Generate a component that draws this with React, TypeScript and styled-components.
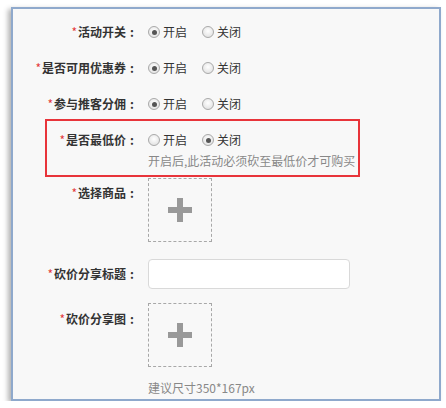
import styled, { createGlobalStyle } from 'styled-components';

const GlobalStyle = createGlobalStyle`
    html, body {
        margin: 0;
        padding: 0;
        background: #ffffff;
    }
    body {
        font-family: 'Noto Sans CJK SC', 'Noto Sans', sans-serif;
        font-size: 12px;
        color: #333;
    }
`;

const Panel = styled.div`
    box-sizing: border-box;
    width: 430px;
    height: 394px;
    margin: 7px 0 0 11px;
    padding-top: 13px;
    border: 2px solid #8fa9cc;
    background: #f8f8f8;
    box-shadow: -3px 2px 5px rgba(0, 0, 0, 0.3);
    overflow: hidden;
`;

const Row = styled.div<{ $gap?: number; $center?: boolean }>`
    display: flex;
    align-items: ${(p) => (p.$center ? 'center' : 'flex-start')};
    margin-bottom: ${(p) => p.$gap ?? 0}px;
`;

const Label = styled.div<{ $top?: number }>`
    box-sizing: border-box;
    width: 135px;
    flex-shrink: 0;
    padding-right: 10px;
    padding-top: ${(p) => p.$top ?? 0}px;
    text-align: right;
    font-weight: bold;
    line-height: 20px;
    color: #333;
    white-space: nowrap;
`;

const Star = styled.span`
    color: #e4393c;
    font-weight: normal;
    margin-right: 1px;
`;

const Colon = styled.span`
    display: inline-block;
    width: 12px;
    text-align: center;
`;

const Field = styled.div`
    display: flex;
    flex-direction: column;
`;

const RadioGroup = styled.div`
    display: flex;
    gap: 15px;
    height: 20px;
`;

const RadioOption = styled.label`
    display: flex;
    align-items: center;
    gap: 3px;
    line-height: 20px;
    color: #333;
`;

const RadioDot = styled.span<{ $checked?: boolean }>`
    box-sizing: border-box;
    width: 12px;
    height: 12px;
    border-radius: 50%;
    border: 1px solid #a9a9a9;
    background: radial-gradient(circle at 50% 40%, #ffffff 0%, #e6e6e6 70%, #d6d6d6 100%);
    display: flex;
    align-items: center;
    justify-content: center;

    &::after {
        content: '';
        display: ${(p) => (p.$checked ? 'block' : 'none')};
        width: 5px;
        height: 5px;
        border-radius: 50%;
        background: #555;
    }
`;

const Hint = styled.div<{ $top?: number }>`
    margin-top: ${(p) => p.$top ?? 0}px;
    line-height: 20px;
    color: #888;
    white-space: nowrap;
`;

const Highlight = styled.div`
    position: relative;
    margin-bottom: 7px;
`;

const HighlightFrame = styled.div`
    position: absolute;
    left: 32px;
    width: 315px;
    top: -11px;
    bottom: -6px;
    box-sizing: border-box;
    border: 2px solid #e8343a;
    pointer-events: none;
`;

const UploadBox = styled.div`
    box-sizing: border-box;
    width: 64px;
    height: 64px;
    border: 1px dashed #a8a8a8;
    display: flex;
    align-items: center;
    justify-content: center;
`;

const TextInput = styled.input`
    box-sizing: border-box;
    width: 202px;
    height: 30px;
    border: 1px solid #d9d9d9;
    border-radius: 4px;
    background: #fff;
    outline: none;
`;

const PlusIcon = () => (
    <svg width="24" height="24" viewBox="0 0 24 24">
        <rect x="9" y="0" width="6" height="24" fill="#999" />
        <rect x="0" y="9" width="24" height="6" fill="#999" />
    </svg>
);

const FieldLabel = ({ text, top }: { text: string; top?: number }) => (
    <Label $top={top}>
        <Star>*</Star>
        {text}
        <Colon>:</Colon>
    </Label>
);

const Radios = ({ on }: { on: boolean }) => (
    <RadioGroup>
        <RadioOption>
            <RadioDot $checked={on} />
            开启
        </RadioOption>
        <RadioOption>
            <RadioDot $checked={!on} />
            关闭
        </RadioOption>
    </RadioGroup>
);

const switches = [
    { label: '活动开关', on: true },
    { label: '是否可用优惠券', on: true },
    { label: '参与推客分佣', on: true },
];

export default function App() {
    return (
        <>
            <GlobalStyle />
            <Panel>
                {switches.map((s) => (
                    <Row key={s.label} $gap={16}>
                        <FieldLabel text={s.label} />
                        <Radios on={s.on} />
                    </Row>
                ))}
                <Highlight>
                    <HighlightFrame />
                    <Row>
                        <FieldLabel text="是否最低价" />
                        <Field>
                            <Radios on={false} />
                            <Hint $top={1}>开启后,此活动必须砍至最低价才可购买</Hint>
                        </Field>
                    </Row>
                </Highlight>
                <Row $gap={17}>
                    <FieldLabel text="选择商品" top={5} />
                    <UploadBox>
                        <PlusIcon />
                    </UploadBox>
                </Row>
                <Row $gap={14} $center>
                    <FieldLabel text="砍价分享标题" />
                    <TextInput type="text" />
                </Row>
                <Row>
                    <FieldLabel text="砍价分享图" top={6} />
                    <Field>
                        <UploadBox>
                            <PlusIcon />
                        </UploadBox>
                        <Hint $top={11}>建议尺寸350*167px</Hint>
                    </Field>
                </Row>
            </Panel>
        </>
    );
}
